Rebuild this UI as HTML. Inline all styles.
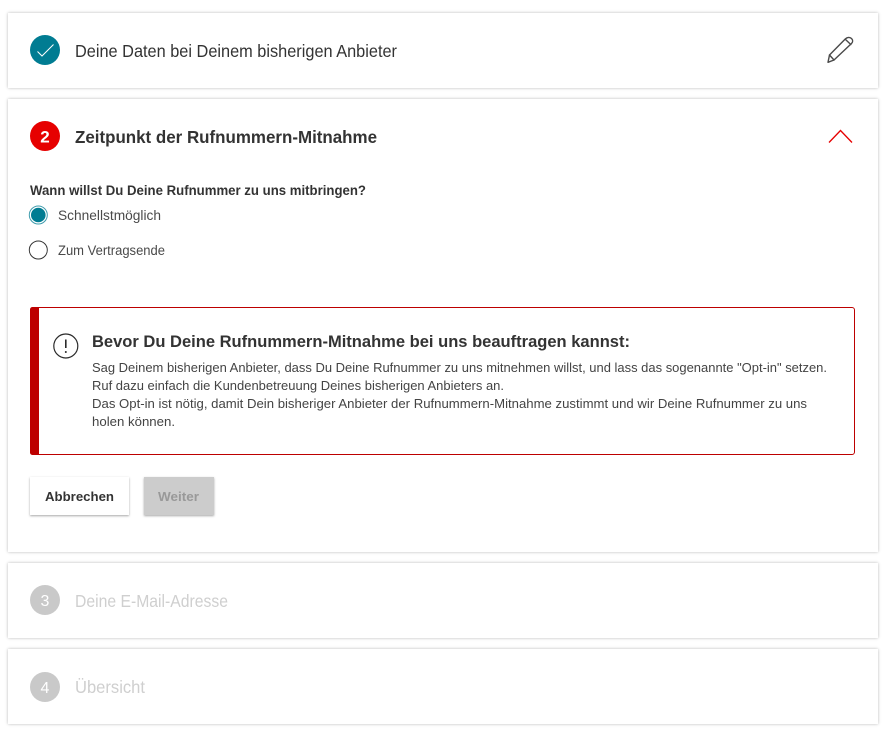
<!DOCTYPE html>
<html lang="de"><head><meta charset="utf-8"><title>Rufnummern-Mitnahme</title>
<style>
html,body{margin:0;padding:0;background:#fff}
body{position:relative;width:895px;height:733px;overflow:hidden;font-family:"Liberation Sans",sans-serif}
.card{position:absolute;left:8px;width:870px;background:#fff;box-shadow:0 0 3px rgba(0,0,0,.28)}
svg{position:absolute;left:0;top:0}
text{font-family:"Liberation Sans",sans-serif}
</style></head><body>
<div class="card" style="top:13px;height:75px"></div>
<div class="card" style="top:99px;height:453px"></div>
<div class="card" style="top:563px;height:75px"></div>
<div class="card" style="top:649px;height:75px"></div>
<svg width="895" height="733" viewBox="0 0 895 733" xmlns="http://www.w3.org/2000/svg">
<defs><filter id="s" x="-10%" y="-20%" width="120%" height="150%"><feDropShadow dx="0" dy="1" stdDeviation="1" flood-color="#000" flood-opacity=".35"/></filter></defs>
<!-- step 1 -->
<circle cx="45" cy="50" r="15" fill="#007c92"/>
<path d="M37.500 51.500L42 56L53.500 44.500" fill="none" stroke="#fff" stroke-width="1"/>
<text x="75" y="57" font-size="17.500" fill="#333" textLength="322" lengthAdjust="spacingAndGlyphs">Deine Daten bei Deinem bisherigen Anbieter</text>
<g fill="none" stroke="#4a4a4a" stroke-width="1.400" stroke-linejoin="round" stroke-linecap="round">
<path d="M828 62.300L829.500 55L845.500 38.800C847.500 37 850 37 851.500 38.500C853 40 853 42 851.500 43.500L834 60Z"/>
<path d="M845.500 39.500L850.800 44.500M829.500 55L834 60"/>
</g>
<!-- step 2 -->
<circle cx="45" cy="136" r="15" fill="#e60000"/>
<text x="45" y="142.500" font-size="17" font-weight="700" fill="#fff" text-anchor="middle">2</text>
<text x="75" y="143" font-size="17.500" font-weight="700" fill="#333" textLength="302" lengthAdjust="spacingAndGlyphs">Zeitpunkt der Rufnummern-Mitnahme</text>
<path d="M829 142.500L840.500 130.500L852 142.500" fill="none" stroke="#e60000" stroke-width="1.300"/>
<text x="30" y="195" font-size="13.500" font-weight="700" fill="#333" textLength="336" lengthAdjust="spacingAndGlyphs">Wann willst Du Deine Rufnummer zu uns mitbringen?</text>
<circle cx="38.300" cy="215" r="9" fill="#fff" stroke="#3f9cad" stroke-width="1"/>
<circle cx="38.300" cy="215" r="7.300" fill="#007c92"/>
<text x="58" y="220" font-size="13.500" fill="#4a4a4a" textLength="103" lengthAdjust="spacingAndGlyphs">Schnellstmöglich</text>
<circle cx="38.300" cy="250" r="9" fill="#fff" stroke="#333" stroke-width="1"/>
<text x="58" y="255" font-size="13.500" fill="#4a4a4a" textLength="107" lengthAdjust="spacingAndGlyphs">Zum Vertragsende</text>
<!-- alert -->
<rect x="30.500" y="307.500" width="824" height="147" rx="2.500" fill="#fff" stroke="#bd0000" stroke-width="1"/>
<path d="M39 307H32.500a2.500 2.500 0 0 0-2.500 2.500v143a2.500 2.500 0 0 0 2.500 2.500H39z" fill="#bd0000"/>
<circle cx="65.800" cy="346" r="12" fill="none" stroke="#2a2a2a" stroke-width="1.200"/>
<path d="M65.800 339.500v8.500" stroke="#2a2a2a" stroke-width="1.600" fill="none"/>
<circle cx="65.800" cy="352" r="1" fill="#2a2a2a"/>
<text x="92" y="347" font-size="16.500" font-weight="700" fill="#333" textLength="538" lengthAdjust="spacingAndGlyphs">Bevor Du Deine Rufnummern-Mitnahme bei uns beauftragen kannst:</text>
<g font-size="12.500" fill="#444">
<text x="92" y="372" textLength="735" lengthAdjust="spacingAndGlyphs">Sag Deinem bisherigen Anbieter, dass Du Deine Rufnummer zu uns mitnehmen willst, und lass das sogenannte "Opt-in" setzen.</text>
<text x="92" y="390" textLength="412" lengthAdjust="spacingAndGlyphs">Ruf dazu einfach die Kundenbetreuung Deines bisherigen Anbieters an.</text>
<text x="92" y="408" textLength="715" lengthAdjust="spacingAndGlyphs">Das Opt-in ist nötig, damit Dein bisheriger Anbieter der Rufnummern-Mitnahme zustimmt und wir Deine Rufnummer zu uns</text>
<text x="92" y="426" textLength="83" lengthAdjust="spacingAndGlyphs">holen können.</text>
</g>
<!-- buttons -->
<rect x="30" y="477" width="99" height="38" fill="#fff" filter="url(#s)"/>
<text x="45" y="501" font-size="13" font-weight="700" fill="#333" textLength="69" lengthAdjust="spacingAndGlyphs">Abbrechen</text>
<rect x="144" y="477" width="70" height="38" fill="#ccc" filter="url(#s)"/>
<text x="158" y="501" font-size="13" font-weight="700" fill="#999" textLength="41" lengthAdjust="spacingAndGlyphs">Weiter</text>
<!-- step 3 -->
<circle cx="45" cy="600" r="15" fill="#c9c9c9"/>
<text x="45" y="606" font-size="16" fill="#fff" text-anchor="middle">3</text>
<text x="75" y="607" font-size="17.500" fill="#cfcfcf" textLength="153" lengthAdjust="spacingAndGlyphs">Deine E-Mail-Adresse</text>
<!-- step 4 -->
<circle cx="45" cy="687" r="15" fill="#c9c9c9"/>
<text x="45" y="693" font-size="16" fill="#fff" text-anchor="middle">4</text>
<text x="75" y="693" font-size="17.500" fill="#cfcfcf" textLength="70" lengthAdjust="spacingAndGlyphs">Übersicht</text>
</svg>
</body></html>
